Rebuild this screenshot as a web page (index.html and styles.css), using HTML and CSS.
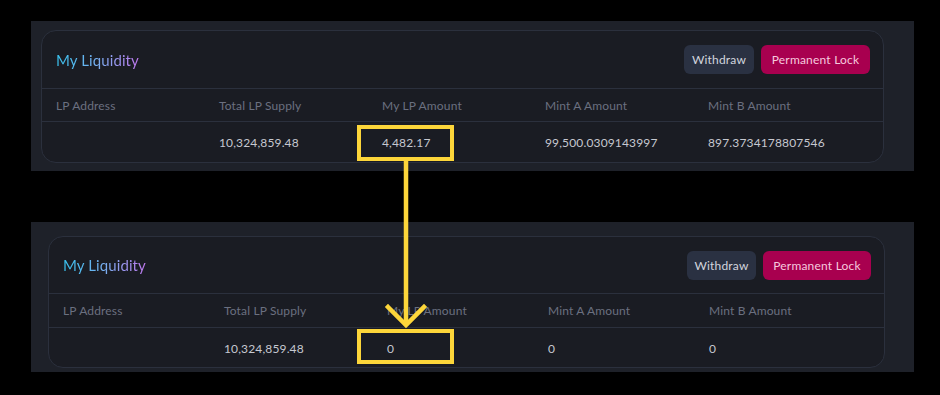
FILE: index.html
```html
<!DOCTYPE html>
<html>
<head>
<meta charset="utf-8">
<link rel="stylesheet" href="styles.css">
</head>
<body>
<div class="page">
  <section class="shot shot-top">
    <div class="card card-top">
      <div class="card-head">
        <h2 class="title">My Liquidity</h2>
        <div class="actions">
          <button class="btn btn-withdraw">Withdraw</button>
          <button class="btn btn-lock">Permanent Lock</button>
        </div>
      </div>
      <div class="row row-head">
        <div>LP Address</div>
        <div>Total LP Supply</div>
        <div>My LP Amount</div>
        <div>Mint A Amount</div>
        <div>Mint B Amount</div>
      </div>
      <div class="row row-data">
        <div></div>
        <div>10,324,859.48</div>
        <div>4,482.17</div>
        <div>99,500.0309143997</div>
        <div>897.3734178807546</div>
      </div>
    </div>
  </section>

  <section class="shot shot-bottom">
    <div class="card card-bottom">
      <div class="card-head">
        <h2 class="title">My Liquidity</h2>
        <div class="actions">
          <button class="btn btn-withdraw">Withdraw</button>
          <button class="btn btn-lock">Permanent Lock</button>
        </div>
      </div>
      <div class="row row-head">
        <div>LP Address</div>
        <div>Total LP Supply</div>
        <div>My LP Amount</div>
        <div>Mint A Amount</div>
        <div>Mint B Amount</div>
      </div>
      <div class="row row-data">
        <div></div>
        <div>10,324,859.48</div>
        <div>0</div>
        <div>0</div>
        <div>0</div>
      </div>
    </div>
  </section>

  <div class="mark mark-top"></div>
  <div class="mark mark-bottom"></div>
  <svg class="arrow" width="60" height="172" viewBox="0 0 60 172">
    <path d="M30 0 V164" stroke="#fdd63a" stroke-width="4.5" fill="none"/>
    <path d="M12 146 L30 164 L48 146" stroke="#fdd63a" stroke-width="4.5" fill="none" stroke-linecap="square"/>
  </svg>
</div>
</body>
</html>
```

FILE: styles.css
```css
* { box-sizing: border-box; }
html, body { margin: 0; padding: 0; background: #000; }
body {
  width: 940px;
  height: 395px;
  overflow: hidden;
  font-family: "Lato", "Noto Sans", sans-serif;
}
.page {
  position: relative;
  width: 940px;
  height: 395px;
  padding-top: 21px;
  padding-left: 31px;
}
.shot {
  width: 883px;
  height: 150px;
  background: #1e2129;
}
.shot-top { padding: 9px 0 0 10px; }
.shot-bottom { margin-top: 51px; padding: 14px 0 0 17px; }

.card {
  background: #1a1c23;
  border: 1px solid #2b303d;
  border-radius: 15px;
  overflow: hidden;
}
.card-top { width: 843px; height: 133px; }
.card-bottom { width: 837px; height: 132px; }

.card-head {
  display: flex;
  align-items: center;
  justify-content: space-between;
  padding: 0 13px 0 14px;
  height: 58px;
  border-bottom: 1px solid #2b303d;
}
.card-bottom .card-head { height: 57px; }

.title {
  margin: 0;
  font-size: 15px;
  font-weight: 400;
  letter-spacing: 0.1px;
  background: linear-gradient(90deg, #38c2ee 0%, #78aef0 50%, #bf78ee 100%);
  -webkit-background-clip: text;
  background-clip: text;
  color: transparent;
}
.actions { display: flex; gap: 7px; }
.btn {
  border: none;
  height: 29px;
  border-radius: 6px;
  font-family: inherit;
  font-size: 12px;
  letter-spacing: 0.2px;
  padding: 0;
}
.btn-withdraw { width: 70px; background: #2a3142; color: #d2d5de; }
.btn-lock { width: 109px; background: #a8004f; color: #f6c9de; }
.card-bottom .btn-withdraw { width: 69px; }
.card-bottom .btn-lock { width: 108px; }

.row {
  display: grid;
  grid-template-columns: repeat(5, 163px);
  align-items: center;
  padding-left: 14px;
  font-size: 12px;
  letter-spacing: 0.15px;
}
.card-bottom .row { grid-template-columns: 161px 163px 161px 161px 161px; }
.row-head {
  height: 33px;
  color: #6b7080;
  border-bottom: 1px solid #2b303d;
}
.card-bottom .row-head { height: 34px; }
.row-data {
  height: 40px;
  color: #c6c8d0;
}

.mark {
  position: absolute;
  border: 4px solid #fdd63a;
}
.mark-top { left: 357px; top: 125px; width: 97px; height: 36px; }
.mark-bottom { left: 357px; top: 329px; width: 97px; height: 35px; }
.arrow {
  position: absolute;
  left: 376px;
  top: 161px;
}
```
